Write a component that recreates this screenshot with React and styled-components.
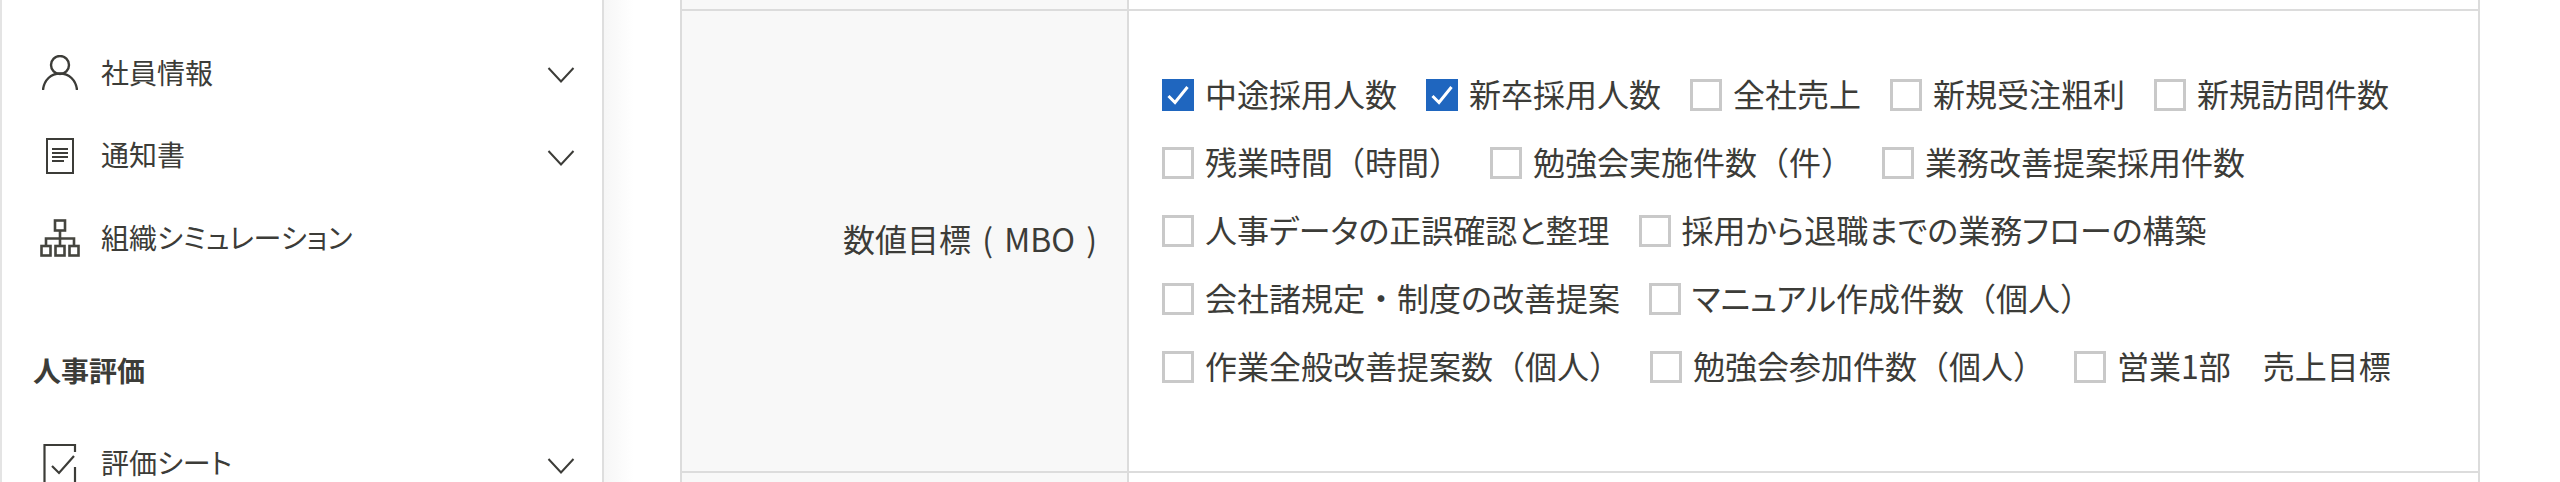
import React from "react";
import styled, { createGlobalStyle } from "styled-components";

const Global = createGlobalStyle`
  html, body { margin: 0; padding: 0; height: 482px; overflow: hidden; background: #fff; }
  body { font-family: "Noto Sans CJK JP", "Noto Sans", sans-serif; color: #3c3c38; }
  * { box-sizing: border-box; }
`;

const Page = styled.div`
  display: flex;
  width: 2560px;
  height: 482px;
  overflow: hidden;
`;

const Sidebar = styled.aside`
  flex: 0 0 604px;
  height: 482px;
  padding-top: 32px;
  background: #fff;
  border-left: 2px solid #e4e4e4;
  border-right: 2px solid #dedede;
  overflow: hidden;
`;

const NavRow = styled.div`
  display: flex;
  align-items: center;
  height: 82.5px;
  padding: 0 27px 0 38px;
`;

const IconSlot = styled.span`
  flex: 0 0 40px;
  height: 40px;
  display: flex;
  align-items: center;
  justify-content: center;
  svg { display: block; }
`;

const NavText = styled.span`
  margin: 0 0 3px 21px;
  font-size: 28px;
  line-height: 40px;
  white-space: nowrap;
`;

const Chevron = styled.svg`
  margin-left: auto;
  margin-top: 4px;
  flex: none;
`;

const SectionTitle = styled.h2`
  margin: 70px 0 33px;
  padding-left: 31px;
  font-size: 28px;
  line-height: 40px;
  font-weight: 700;
`;

const Main = styled.main`
  flex: 1;
  padding-left: 76px;
  min-width: 0;
  background: linear-gradient(to right, #f6f6f6, #fff 30px);
`;

const Table = styled.div`
  display: grid;
  width: 1800px;
  grid-template-columns: 447px 1fr;
  grid-template-rows: 9px 464px 9px;
  border-left: 2px solid #dcdcdc;
  border-right: 2px solid #dcdcdc;
  background: #fff;
`;

const LabelCell = styled.div`
  background: #f8f8f8;
  border-right: 2px solid #dcdcdc;
  ${(p) => p.$main && "border-top: 2px solid #dcdcdc; border-bottom: 2px solid #dcdcdc; padding-bottom: 6px;"}
  display: flex;
  align-items: center;
  justify-content: flex-end;
  padding-right: 30px;
  font-size: 32px;
  word-spacing: 4px;
  white-space: nowrap;
`;

const ValueCell = styled.div`
  background: #fff;
  ${(p) => p.$main && "border-top: 2px solid #dcdcdc; border-bottom: 2px solid #dcdcdc; padding: 68px 0 0 33px;"}
`;

const Options = styled.div`
  display: flex;
  flex-wrap: wrap;
  column-gap: 29px;
  row-gap: 36px;
`;

const Option = styled.label`
  display: flex;
  align-items: center;
  gap: 11px;
  height: 32px;
  font-size: 32px;
  line-height: 32px;
  white-space: nowrap;
`;

const OptionText = styled.span`
  margin-bottom: 4px;
`;

const Kana = styled.span`
  font-feature-settings: "palt";
`;

const Box = styled.span`
  flex: none;
  width: 32px;
  height: 32px;
  display: flex;
  align-items: center;
  justify-content: center;
  background: ${(p) => (p.$checked ? "#1f66bf" : "#fff")};
  border: ${(p) => (p.$checked ? "0" : "3px solid #c9c9c9")};
`;

const UserIcon = () => (
  <svg width="36" height="36" viewBox="0 0 36 36" fill="none" stroke="#3c3c38" strokeWidth="2.4">
    <circle cx="18" cy="10" r="9" />
    <path d="M1 35c1-10 8-16.500 17-16.500S34 25 35 35" />
  </svg>
);

const DocIcon = () => (
  <svg width="28" height="36" viewBox="0 0 28 36" fill="none" stroke="#3c3c38" strokeWidth="2">
    <rect x="1" y="1" width="26" height="34" />
    <path d="M6 11h16M6 15h16M6 19h16M6 23h12" strokeWidth="1.8" />
  </svg>
);

const OrgIcon = () => (
  <svg width="40" height="38" viewBox="0 0 40 38" fill="none" stroke="#45453f" strokeWidth="2.6">
    <rect x="15" y="1.500" width="10" height="10" />
    <rect x="1.500" y="27" width="9" height="9.500" />
    <rect x="15.500" y="27" width="9" height="9.500" />
    <rect x="29.500" y="27" width="9" height="9.500" />
    <path d="M20 11.500V27M6 27v-7.500h28V27" />
  </svg>
);

const CheckIcon = () => (
  <svg width="34" height="40" viewBox="0 0 34 40" fill="none" stroke="#3c3c38" strokeWidth="2.2">
    <path d="M32 8V1H1.500v38" />
    <path d="M9 22l7 7L31 12" />
    <path d="M32 23v17" />
  </svg>
);

const ChevronDown = () => (
  <Chevron width="28" height="16" viewBox="0 0 28 16" fill="none" stroke="#3c3c38" strokeWidth="2">
    <path d="M1.500 1L14 14.500 26.500 1" />
  </Chevron>
);

const Tick = () => (
  <svg width="22" height="20" viewBox="0 0 22 20" fill="none" stroke="#fff" strokeWidth="3">
    <path d="M1.500 11l6.500 6.500L20.500 2" />
  </svg>
);

const withKana = (text) =>
  text.split(/([ぁ-んァ-ヶー]+)/).map((part, i) =>
    i % 2 ? <Kana key={i}>{part}</Kana> : part
  );

const options = [
  ["中途採用人数", true],
  ["新卒採用人数", true],
  ["全社売上"],
  ["新規受注粗利"],
  ["新規訪問件数"],
  ["残業時間（時間）"],
  ["勉強会実施件数（件）"],
  ["業務改善提案採用件数"],
  ["人事データの正誤確認と整理"],
  ["採用から退職までの業務フローの構築"],
  ["会社諸規定・制度の改善提案"],
  ["マニュアル作成件数（個人）"],
  ["作業全般改善提案数（個人）"],
  ["勉強会参加件数（個人）"],
  ["営業1部　売上目標"],
];

export default function App() {
  return (
    <>
      <Global />
      <Page>
        <Sidebar>
          <NavRow>
            <IconSlot><UserIcon /></IconSlot>
            <NavText>社員情報</NavText>
            <ChevronDown />
          </NavRow>
          <NavRow>
            <IconSlot><DocIcon /></IconSlot>
            <NavText>通知書</NavText>
            <ChevronDown />
          </NavRow>
          <NavRow>
            <IconSlot><OrgIcon /></IconSlot>
            <NavText>{withKana("組織シミュレーション")}</NavText>
          </NavRow>
          <SectionTitle>人事評価</SectionTitle>
          <NavRow>
            <IconSlot><CheckIcon /></IconSlot>
            <NavText>{withKana("評価シート")}</NavText>
            <ChevronDown />
          </NavRow>
        </Sidebar>
        <Main>
          <Table>
            <LabelCell />
            <ValueCell />
            <LabelCell $main>数値目標 ( MBO )</LabelCell>
            <ValueCell $main>
              <Options>
                {options.map(([text, checked]) => (
                  <Option key={text}>
                    <Box $checked={checked}>{checked && <Tick />}</Box>
                    <OptionText>{withKana(text)}</OptionText>
                  </Option>
                ))}
              </Options>
            </ValueCell>
            <LabelCell />
            <ValueCell />
          </Table>
        </Main>
      </Page>
    </>
  );
}
